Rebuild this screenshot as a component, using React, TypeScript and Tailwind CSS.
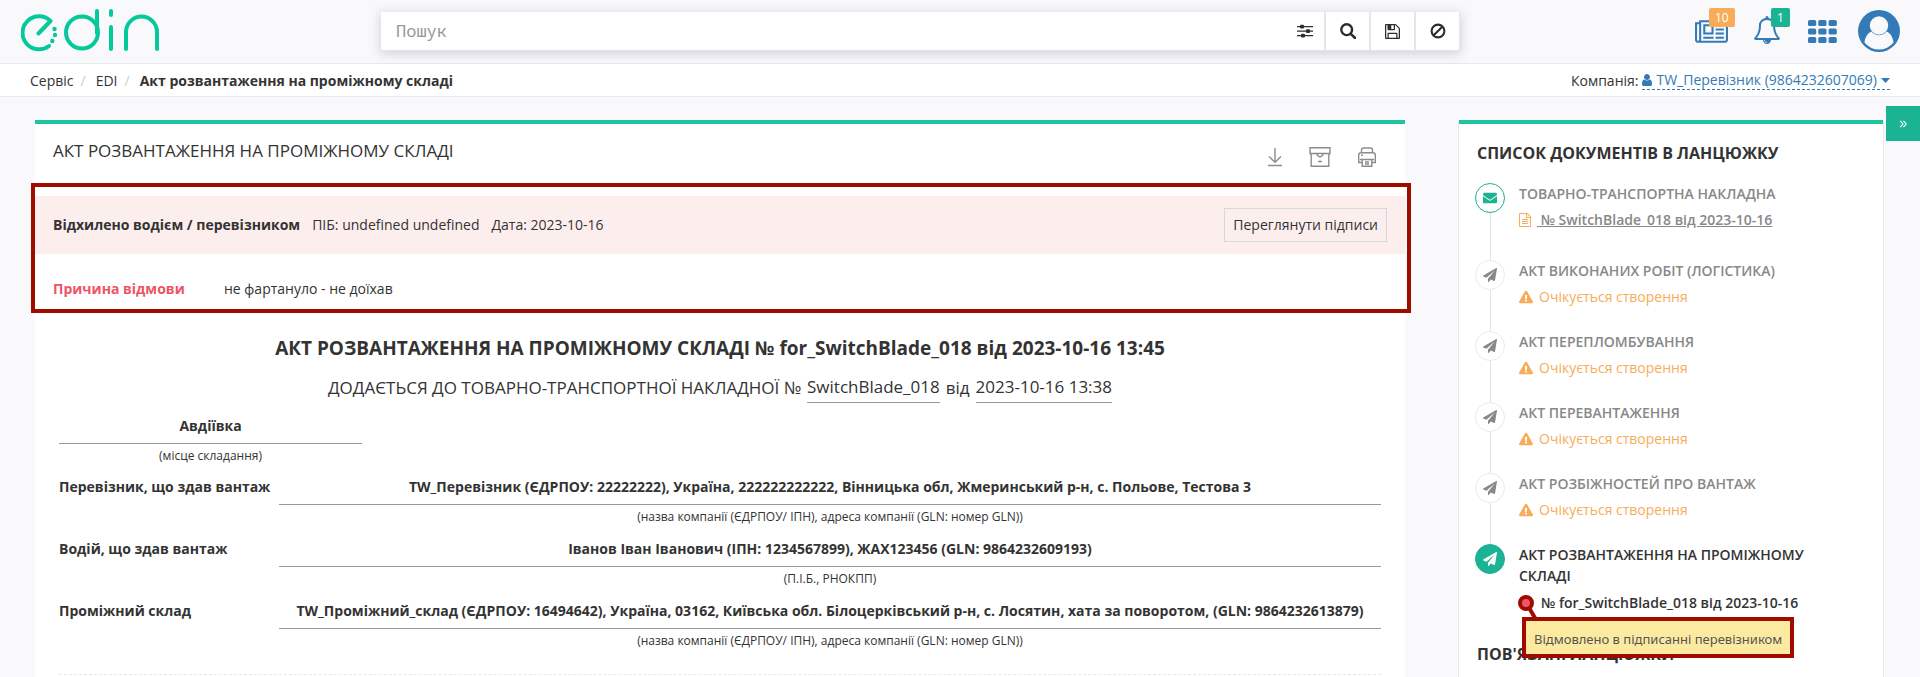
import React from "react";
import { FaEnvelope, FaExclamationTriangle } from "react-icons/fa";

type IconProps = { className?: string };

function Logo({ className }: IconProps) {
  return (
    <svg viewBox="0 0 140 44" className={className} fill="none" stroke="#04c99a" strokeWidth="4" strokeLinecap="round" aria-hidden="true">
      <path d="M17.500 25.500 L29.500 13 A16.500 16.500 0 1 0 28 38" strokeLinejoin="round" />
      <g fill="#04c99a" stroke="none">
        <circle cx="33.500" cy="21" r="2.200" />
        <circle cx="34" cy="27" r="2.200" />
        <circle cx="31.300" cy="33" r="2.200" />
      </g>
      <circle cx="61" cy="24.500" r="16" />
      <path d="M76 3 V25" />
      <path d="M90 3 V7 M90 19 V41" />
      <path d="M105 41 V24 A15.500 15.500 0 0 1 136 24 V41" />
    </svg>
  );
}

function SlidersIcon({ className }: IconProps) {
  return (
    <svg viewBox="0 0 16 14" className={className} fill="#2b2e30" aria-hidden="true">
      <path d="M0 2h16v1.200H0zM0 6.500h16v1.200H0zM0 11h16v1.200H0z" />
      <rect x="3" y="0.800" width="4" height="3.600" rx="1" />
      <rect x="9" y="5.300" width="4" height="3.600" rx="1" />
      <rect x="4" y="9.800" width="4" height="3.600" rx="1" />
    </svg>
  );
}

function SearchIcon({ className }: IconProps) {
  return (
    <svg viewBox="0 0 16 16" className={className} fill="none" stroke="#2b2e30" aria-hidden="true">
      <circle cx="6.700" cy="6.700" r="5.400" strokeWidth="2.400" />
      <path d="M10.800 10.800 L15 15" strokeWidth="2.600" strokeLinecap="round" />
    </svg>
  );
}

function FloppyIcon({ className }: IconProps) {
  return (
    <svg viewBox="128 128 1536 1536" className={className} fill="#2b2e30" aria-hidden="true">
      <path d="M512 1536h768v-384h-768v384zm896 0h128v-896q0-14-10-38.500t-20-34.500l-281-281q-10-10-34-20t-39-10v416q0 40-28 68t-68 28h-576q-40 0-68-28t-28-68v-416h-128v1280h128v-416q0-40 28-68t68-28h832q40 0 68 28t28 68v416zm-384-928v-320q0-13-9.500-22.500t-22.500-9.500h-192q-13 0-22.500 9.500t-9.500 22.500v320q0 13 9.500 22.500t22.500 9.500h192q13 0 22.500-9.500t9.500-22.500zm640 32v928q0 40-28 68t-68 28h-1344q-40 0-68-28t-28-68v-1344q0-40 28-68t68-28h928q40 0 88 20t76 48l280 280q28 28 48 76t20 88z" />
    </svg>
  );
}

function BanIcon({ className }: IconProps) {
  return (
    <svg viewBox="0 0 16 16" className={className} fill="none" stroke="#2b2e30" strokeWidth="2.100" aria-hidden="true">
      <circle cx="8" cy="8" r="6.400" />
      <path d="M12.300 3.700 L3.700 12.300" />
    </svg>
  );
}

function NewspaperIcon({ className }: IconProps) {
  return (
    <svg viewBox="0 256 2048 1408" className={className} fill="#337ab7" aria-hidden="true">
      <path d="M1024 640h-384v384h384v-384zm128 640v128h-640v-128h640zm0-768v640h-640v-640h640zm640 768v128h-512v-128h512zm0-256v128h-512v-128h512zm0-256v128h-512v-128h512zm0-256v128h-512v-128h512zm-1536 960v-960h-128v960q0 26 19 45t45 19 45-19 19-45zm1664 0v-1088h-1536v1088q0 33-11 64h1483q26 0 45-19t19-45zm128-1216v1216q0 80-56 136t-136 56h-1664q-80 0-136-56t-56-136v-1088h256v-128h1792z" />
    </svg>
  );
}

function BellIcon({ className }: IconProps) {
  return (
    <svg viewBox="0 0 1792 1792" className={className} fill="#337ab7" aria-hidden="true">
      <path d="M912 1696q0-16-16-16-59 0-101.500-42.500t-42.500-101.500q0-16-16-16t-16 16q0 73 51.500 124.500t124.500 51.500q16 0 16-16zm-666-288h1300q-266-300-266-832 0-51-24-105t-69-103-121.500-80.500-169.500-31.500-169.500 31.500-121.500 80.500-69 103-24 105q0 532-266 832zm1482 0q0 52-38 90t-90 38h-448q0 106-75 181t-181 75-181-75-75-181h-448q-52 0-90-38t-38-90q50-42 91-88t85-119.500 74.500-158.500 50-206 19.500-260q0-152 117-282.500t307-158.500q-8-19-8-39 0-40 28-68t68-28 68 28 28 68q0 20-8 39 190 28 307 158.500t117 282.500q0 139 19.500 260t50 206 74.500 158.500 85 119.500 91 88z" />
    </svg>
  );
}

function AppsIcon({ className }: IconProps) {
  return (
    <svg viewBox="0 0 29 23" className={className} fill="#337ab7" aria-hidden="true">
      {[0, 8.500, 17].map((y) =>
        [0, 10.300, 20.600].map((x) => <rect key={`${x}-${y}`} x={x} y={y} width="8.200" height="6" rx="1.600" />)
      )}
    </svg>
  );
}

function AvatarIcon({ className }: IconProps) {
  return (
    <svg viewBox="0 0 42 42" className={className} aria-hidden="true">
      <circle cx="21" cy="21" r="21" fill="#337ab7" />
      <path d="M6.500 32.500 C7.200 26.500 10 22.800 13.500 21.500 C17.500 26.500 24.500 26.500 28.500 21.500 C32 22.800 34.800 26.500 35.500 32.500 A18.400 18.400 0 0 1 6.500 32.500Z" fill="#f9f9fb" />
      <circle cx="21" cy="15.500" r="9.200" fill="#f9f9fb" />
    </svg>
  );
}

function UserIcon({ className }: IconProps) {
  return (
    <svg viewBox="256 128 1280 1536" className={className} fill="#337ab7" aria-hidden="true">
      <path d="M1536 1399q0 109-62.500 187t-150.500 78h-854q-88 0-150.500-78t-62.500-187q0-85 8.500-160.500t31.500-152 58.500-131 94-89 134.500-34.500q131 128 313 128t313-128q76 0 134.500 34.500t94 89 58.500 131 31.500 152 8.500 160.500zm-256-887q0 159-112.500 271.500t-271.500 112.500-271.500-112.500-112.500-271.500 112.500-271.500 271.500-112.500 271.500 112.500 112.500 271.500z" />
    </svg>
  );
}

function FileTextIcon({ className }: IconProps) {
  return (
    <svg viewBox="128 0 1536 1792" className={className} fill="#f8ac59" aria-hidden="true">
      <path d="M1596 380q28 28 48 76t20 88v1152q0 40-28 68t-68 28h-1344q-40 0-68-28t-28-68v-1600q0-40 28-68t68-28h896q40 0 88 20t76 48zm-444-244v376h376q-10-29-22-41l-313-313q-12-12-41-22zm384 1528v-1024h-416q-40 0-68-28t-28-68v-416h-768v1536h1280zm-1024-864q0-14 9-23t23-9h704q14 0 23 9t9 23v64q0 14-9 23t-23 9h-704q-14 0-23-9t-9-23v-64zm736 224q14 0 23 9t9 23v64q0 14-9 23t-23 9h-704q-14 0-23-9t-9-23v-64q0-14 9-23t23-9h704zm0 256q14 0 23 9t9 23v64q0 14-9 23t-23 9h-704q-14 0-23-9t-9-23v-64q0-14 9-23t23-9h704z" />
    </svg>
  );
}

function PlaneIcon({ className }: IconProps) {
  return (
    <svg viewBox="0 0 1792 1792" className={className} fill="currentColor" aria-hidden="true">
      <path d="M1764 11q33 24 27 64l-256 1536q-5 29-32 45-14 8-31 8-11 0-24-5l-453-185-242 295q-18 23-49 23-13 0-22-4-19-7-30.500-23.500t-11.500-36.500v-349l864-1059-1069 925-395-162q-37-14-40-55-2-40 32-59l1664-960q15-9 32-9 20 0 36 11z" />
    </svg>
  );
}

function DownloadIcon({ className }: IconProps) {
  return (
    <svg viewBox="0 0 14 20" className={className} fill="none" stroke="#8c8c8c" strokeWidth="1.400" aria-hidden="true">
      <path d="M7 1 V15 M1 9.500 L7 15.200 L13 9.500 M0 18.500 H14" />
    </svg>
  );
}

function ArchiveIcon({ className }: IconProps) {
  return (
    <svg viewBox="0 0 22 20" className={className} fill="none" stroke="#8c8c8c" strokeWidth="1.400" aria-hidden="true">
      <path d="M1 0.700 H21 V6.500 H1Z M2.200 6.500 V19.300 H19.800 V6.500 M8 7 L8.500 8.500 L11 10 L13.500 8.500 L14 7 M9 14.500 H13" />
    </svg>
  );
}

function PrinterIcon({ className }: IconProps) {
  return (
    <svg viewBox="0 0 18 20" className={className} fill="none" stroke="#8c8c8c" strokeWidth="1.400" aria-hidden="true">
      <path d="M3.500 5.500 V3 Q3.500 1 5.500 1 H12.500 Q14.500 1 14.500 3 V5.500 M4 15.500 H0.700 V8 Q0.700 5.800 3 5.800 H15 Q17.300 5.800 17.300 8 V15.500 H14 M2 12.500 H16 M4.200 12.500 V19.300 H13.800 V12.500 M3 8.300 H5 M7 15 H11 M7 17 H11" />
    </svg>
  );
}

type Step = { title: string; state: "sent" | "waiting" | "current" };

const steps: Step[] = [
  { title: "ТОВАРНО-ТРАНСПОРТНА НАКЛАДНА", state: "sent" },
  { title: "АКТ ВИКОНАНИХ РОБІТ (ЛОГІСТИКА)", state: "waiting" },
  { title: "АКТ ПЕРЕПЛОМБУВАННЯ", state: "waiting" },
  { title: "АКТ ПЕРЕВАНТАЖЕННЯ", state: "waiting" },
  { title: "АКТ РОЗБІЖНОСТЕЙ ПРО ВАНТАЖ", state: "waiting" },
  { title: "АКТ РОЗВАНТАЖЕННЯ НА ПРОМІЖНОМУ СКЛАДІ", state: "current" },
];

const parties = [
  {
    label: "Перевізник, що здав вантаж",
    value: "TW_Перевізник (ЄДРПОУ: 22222222), Україна, 222222222222, Вінницька обл, Жмеринський р-н, с. Польове, Тестова 3",
    hint: "(назва компанії (ЄДРПОУ/ ІПН), адреса компанії (GLN: номер GLN))",
  },
  {
    label: "Водій, що здав вантаж",
    value: "Іванов Іван Іванович (ІПН: 1234567899), ЖАХ123456 (GLN: 9864232609193)",
    hint: "(П.І.Б., РНОКПП)",
  },
  {
    label: "Проміжний склад",
    value: "TW_Проміжний_склад (ЄДРПОУ: 16494642), Україна, 03162, Київська обл. Білоцерківський р-н, с. Лосятин, хата за поворотом, (GLN: 9864232613879)",
    hint: "(назва компанії (ЄДРПОУ/ ІПН), адреса компанії (GLN: номер GLN))",
  },
];

function Header() {
  const tool = "flex w-[45px] items-center justify-center border-l-2 border-[#e5e6e9]";
  return (
    <header className="flex h-16 items-start border-b border-[#e7eaec] bg-[#f9f9fb]">
      <a href="#home" aria-label="edin" className="w-[381px] shrink-0 pt-2 pl-[21px]">
        <Logo className="h-11 w-[140px]" />
      </a>
      <form className="mt-3 flex h-[39px] min-w-0 flex-1 border-r border-b border-[#e5e6e9] bg-white shadow-[0_2px_10px_1px_rgba(90,90,140,0.25)]">
        <input
          type="text"
          aria-label="Пошук"
          placeholder="Пошук"
          className="min-w-0 flex-1 bg-transparent px-[15px] font-['Noto_Sans_Mono','DejaVu_Sans_Mono',monospace] text-[17px] outline-none placeholder:text-[#999]"
        />
        <button type="button" aria-label="Фільтри" className="flex w-[38px] items-center justify-center"><SlidersIcon className="h-3.5 w-4" /></button>
        <button type="submit" aria-label="Шукати" className={tool}><SearchIcon className="size-4" /></button>
        <button type="button" aria-label="Зберегти" className={tool}><FloppyIcon className="size-[15px]" /></button>
        <button type="button" aria-label="Очистити" className={tool}><BanIcon className="size-4" /></button>
      </form>
      <nav className="flex w-[460px] shrink-0 items-start justify-end pr-5">
        <button type="button" aria-label="Новини" className="relative mt-5 mr-[25px]">
          <NewspaperIcon className="h-[23px] w-[33px]" />
          <span className="absolute -top-3 left-3.5 rounded-xs bg-[#f8ac59] px-1.5 text-xs leading-[19px] text-white">10</span>
        </button>
        <button type="button" aria-label="Сповіщення" className="relative mt-4 mr-[27px]">
          <BellIcon className="size-7" />
          <span className="absolute -top-2 left-[18px] rounded-xs bg-[#1ab394] px-1.5 text-xs leading-[19px] text-white">1</span>
        </button>
        <button type="button" aria-label="Сервіси" className="mt-5 mr-[21px]"><AppsIcon className="h-[23px] w-[29px]" /></button>
        <button type="button" aria-label="Профіль" className="mt-2.5"><AvatarIcon className="size-[42px]" /></button>
      </nav>
    </header>
  );
}

function Breadcrumbs() {
  return (
    <div className="flex h-[33px] items-center justify-between border-b border-[#e7eaec] bg-white px-[30px] pt-px">
      <nav className="flex items-center">
        <a href="#service">Сервіс</a>
        <span className="pr-2.5 pl-[7px] text-[#ccc]">/</span>
        <a href="#edi">EDI</a>
        <span className="pr-2.5 pl-[7px] text-[#ccc]">/</span>
        <strong>Акт розвантаження на проміжному складі</strong>
      </nav>
      <div className="flex items-center gap-1">
        <span>Компанія:</span>
        <button type="button" className="flex items-center gap-1 border-b border-dashed border-[#337ab7] text-[#337ab7]">
          <UserIcon className="h-3 w-2.5" />
          <span className="leading-[18px]">TW_Перевізник (9864232607069)</span>
          <svg viewBox="0 0 9 5" className="h-[5px] w-[9px]" aria-hidden="true"><path d="M0 0h9L4.500 5z" fill="#337ab7" /></svg>
        </button>
      </div>
    </div>
  );
}

function DocumentCard() {
  return (
    <main className="min-w-0 flex-1 border-t-4 border-[#1fc4a0] bg-white">
      <div className="flex h-[59px] items-start justify-between pr-[29px] pl-[18px]">
        <h1 className="pt-4 text-[17px] leading-[22px] font-medium">АКТ РОЗВАНТАЖЕННЯ НА ПРОМІЖНОМУ СКЛАДІ</h1>
        <div className="flex gap-[27px] pt-[23px]">
          <button type="button" aria-label="Завантажити"><DownloadIcon className="h-5 w-3.5" /></button>
          <button type="button" aria-label="Архівувати"><ArchiveIcon className="h-5 w-[22px]" /></button>
          <button type="button" aria-label="Друкувати"><PrinterIcon className="h-5 w-[18px]" /></button>
        </div>
      </div>

      <section className="-mr-1.5 -ml-1 border-4 border-[#a00b00] pt-[9px]">
        <div className="mr-0.5 flex h-[58px] items-center justify-between bg-[#fdeeee] px-[18px]">
          <p className="flex gap-3">
            <strong>Відхилено водієм / перевізником</strong>
            <span>ПІБ: undefined undefined</span>
            <span>Дата: 2023-10-16</span>
          </p>
          <button type="button" className="h-[34px] border border-[#d8d8da] px-2">Переглянути підписи</button>
        </div>
        <dl className="flex h-[55px] items-center pt-3.5 pl-[18px]">
          <dt className="w-[171px] font-bold text-[#ed5565]">Причина відмови</dt>
          <dd>не фартануло - не доїхав</dd>
        </dl>
      </section>

      <div className="px-6 pt-[21px]">
        <h2 className="text-center text-[19px] leading-7 font-bold">
          АКТ РОЗВАНТАЖЕННЯ НА ПРОМІЖНОМУ СКЛАДІ № for_SwitchBlade_018 від 2023-10-16 13:45
        </h2>
        <div className="flex items-start justify-center gap-1.5 pt-2.5 text-[17px] leading-[22px]">
          <span className="pt-[5px]">ДОДАЄТЬСЯ ДО ТОВАРНО-ТРАНСПОРТНОЇ НАКЛАДНОЇ №</span>
          <span className="border-b border-[#999] pt-1 pb-1">SwitchBlade_018</span>
          <span className="pt-[5px]">від</span>
          <span className="border-b border-[#999] pt-1 pb-1">2023-10-16 13:38</span>
        </div>
        <div className="mt-[13px] w-[303px] text-center">
          <div className="border-b border-[#999] pb-[7px] leading-5 font-bold">Авдіївка</div>
          <div className="pt-[3px] text-xs leading-[18px]">(місце складання)</div>
        </div>
        <dl className="mt-3 flex flex-col gap-[13px] border-b border-dashed border-[#e7eaec] pb-6">
          {parties.map((p) => (
            <div key={p.label} className="flex items-start">
              <dt className="w-[220px] shrink-0 leading-5 font-bold whitespace-nowrap">{p.label}</dt>
              <dd className="min-w-0 flex-1 text-center">
                <div className="border-b border-[#999] pb-[7px] leading-5 font-bold">{p.value}</div>
                <div className="pt-[3px] text-xs leading-[18px]">{p.hint}</div>
              </dd>
            </div>
          ))}
        </dl>
      </div>
    </main>
  );
}

const stepMark = {
  sent: "border-[#1ab394] bg-white text-[#1ab394]",
  waiting: "border-[#e7eaec] bg-white text-[#888]",
  current: "border-[#1ab394] bg-[#1ab394] text-white",
};

function TimelineStep({ step }: { step: Step }) {
  const last = step.state === "current";
  return (
    <li className="flex gap-3.5">
      <div className="flex w-[30px] shrink-0 flex-col items-center">
        <span className={`flex size-[30px] shrink-0 items-center justify-center rounded-full border ${stepMark[step.state]}`}>
          {step.state === "sent" ? <FaEnvelope className="size-3.5" /> : <PlaneIcon className="size-3.5" />}
        </span>
        {!last && <span className="w-px flex-1 bg-[#e0e3e5]" />}
      </div>
      <div className={`leading-[21px] font-semibold ${last ? "text-[#333]" : "text-[#888]"}`}>
        <h3>{step.title}</h3>
        {step.state === "sent" && (
          <p className="flex items-center gap-1.5 pt-[5px] pb-[30px]">
            <FileTextIcon className="h-3.5 w-3" />
            <a href="#ttn" className="underline whitespace-pre">{" № SwitchBlade_018 від 2023-10-16"}</a>
          </p>
        )}
        {step.state === "waiting" && (
          <p className="flex items-center gap-1.5 pt-[5px] pb-6 font-normal text-[#f8ac59]">
            <FaExclamationTriangle className="size-3.5" />
            Очікується створення
          </p>
        )}
        {last && (
          <div className="relative flex items-center pt-1.5">
            <svg viewBox="0 0 20 26" className="absolute top-[9px] -left-px h-[26px] w-5" aria-hidden="true">
              <path d="M10 11 L17 23" stroke="#a00b00" strokeWidth="4" />
              <circle cx="8" cy="8" r="6" fill="#f05468" stroke="#a00b00" strokeWidth="4" />
            </svg>
            <a href="#act" className="pl-[22px]">№ for_SwitchBlade_018 від 2023-10-16</a>
            <div
              role="tooltip"
              className="absolute top-[31px] left-[3px] z-10 border-4 border-[#a00b00] bg-[#fdeaa1] px-2 pt-2 pb-1 font-['Noto_Sans',sans-serif] text-[13px] font-normal whitespace-nowrap text-[#555]"
            >
              Відмовлено в підписанні перевізником
            </div>
          </div>
        )}
      </div>
    </li>
  );
}

function Sidebar() {
  return (
    <aside className="w-[426px] shrink-0 border-x border-x-[#e7eaec] bg-white pr-12 pl-4">
      <div className="-mr-12 -ml-4 h-1 bg-[#1fc4a0]" />
      <h2 className="pt-[18px] pl-0.5 text-base leading-[22px] font-bold whitespace-nowrap">СПИСОК ДОКУМЕНТІВ В ЛАНЦЮЖКУ</h2>
      <ol className="mt-[19px]">
        {steps.map((s) => (
          <TimelineStep key={s.title} step={s} />
        ))}
      </ol>
      <h2 className="pt-[30px] pb-6 pl-0.5 text-base leading-[22px] font-bold">ПОВ'ЯЗАНІ ЛАНЦЮЖКИ</h2>
    </aside>
  );
}

export default function App() {
  return (
    <div className="h-screen overflow-hidden bg-[#f9f9fb] font-['Open_Sans',sans-serif] text-sm text-[#333]">
      <Header />
      <Breadcrumbs />
      <div className="flex pt-[9px] pl-[35px]">
        <div className="flex min-w-0 flex-1 gap-[53px] pt-3.5">
          <DocumentCard />
          <Sidebar />
        </div>
        <button type="button" aria-label="Згорнути панель" className="ml-0.5 flex h-[35px] w-[34px] shrink-0 items-center justify-center bg-[#1ab394]">
          <svg viewBox="0 0 10 10" className="size-2" fill="none" stroke="#fff" strokeWidth="1.400" aria-hidden="true">
            <path d="M1.500 1 L5 5 L1.500 9 M5.500 1 L9 5 L5.500 9" />
          </svg>
        </button>
      </div>
    </div>
  );
}
